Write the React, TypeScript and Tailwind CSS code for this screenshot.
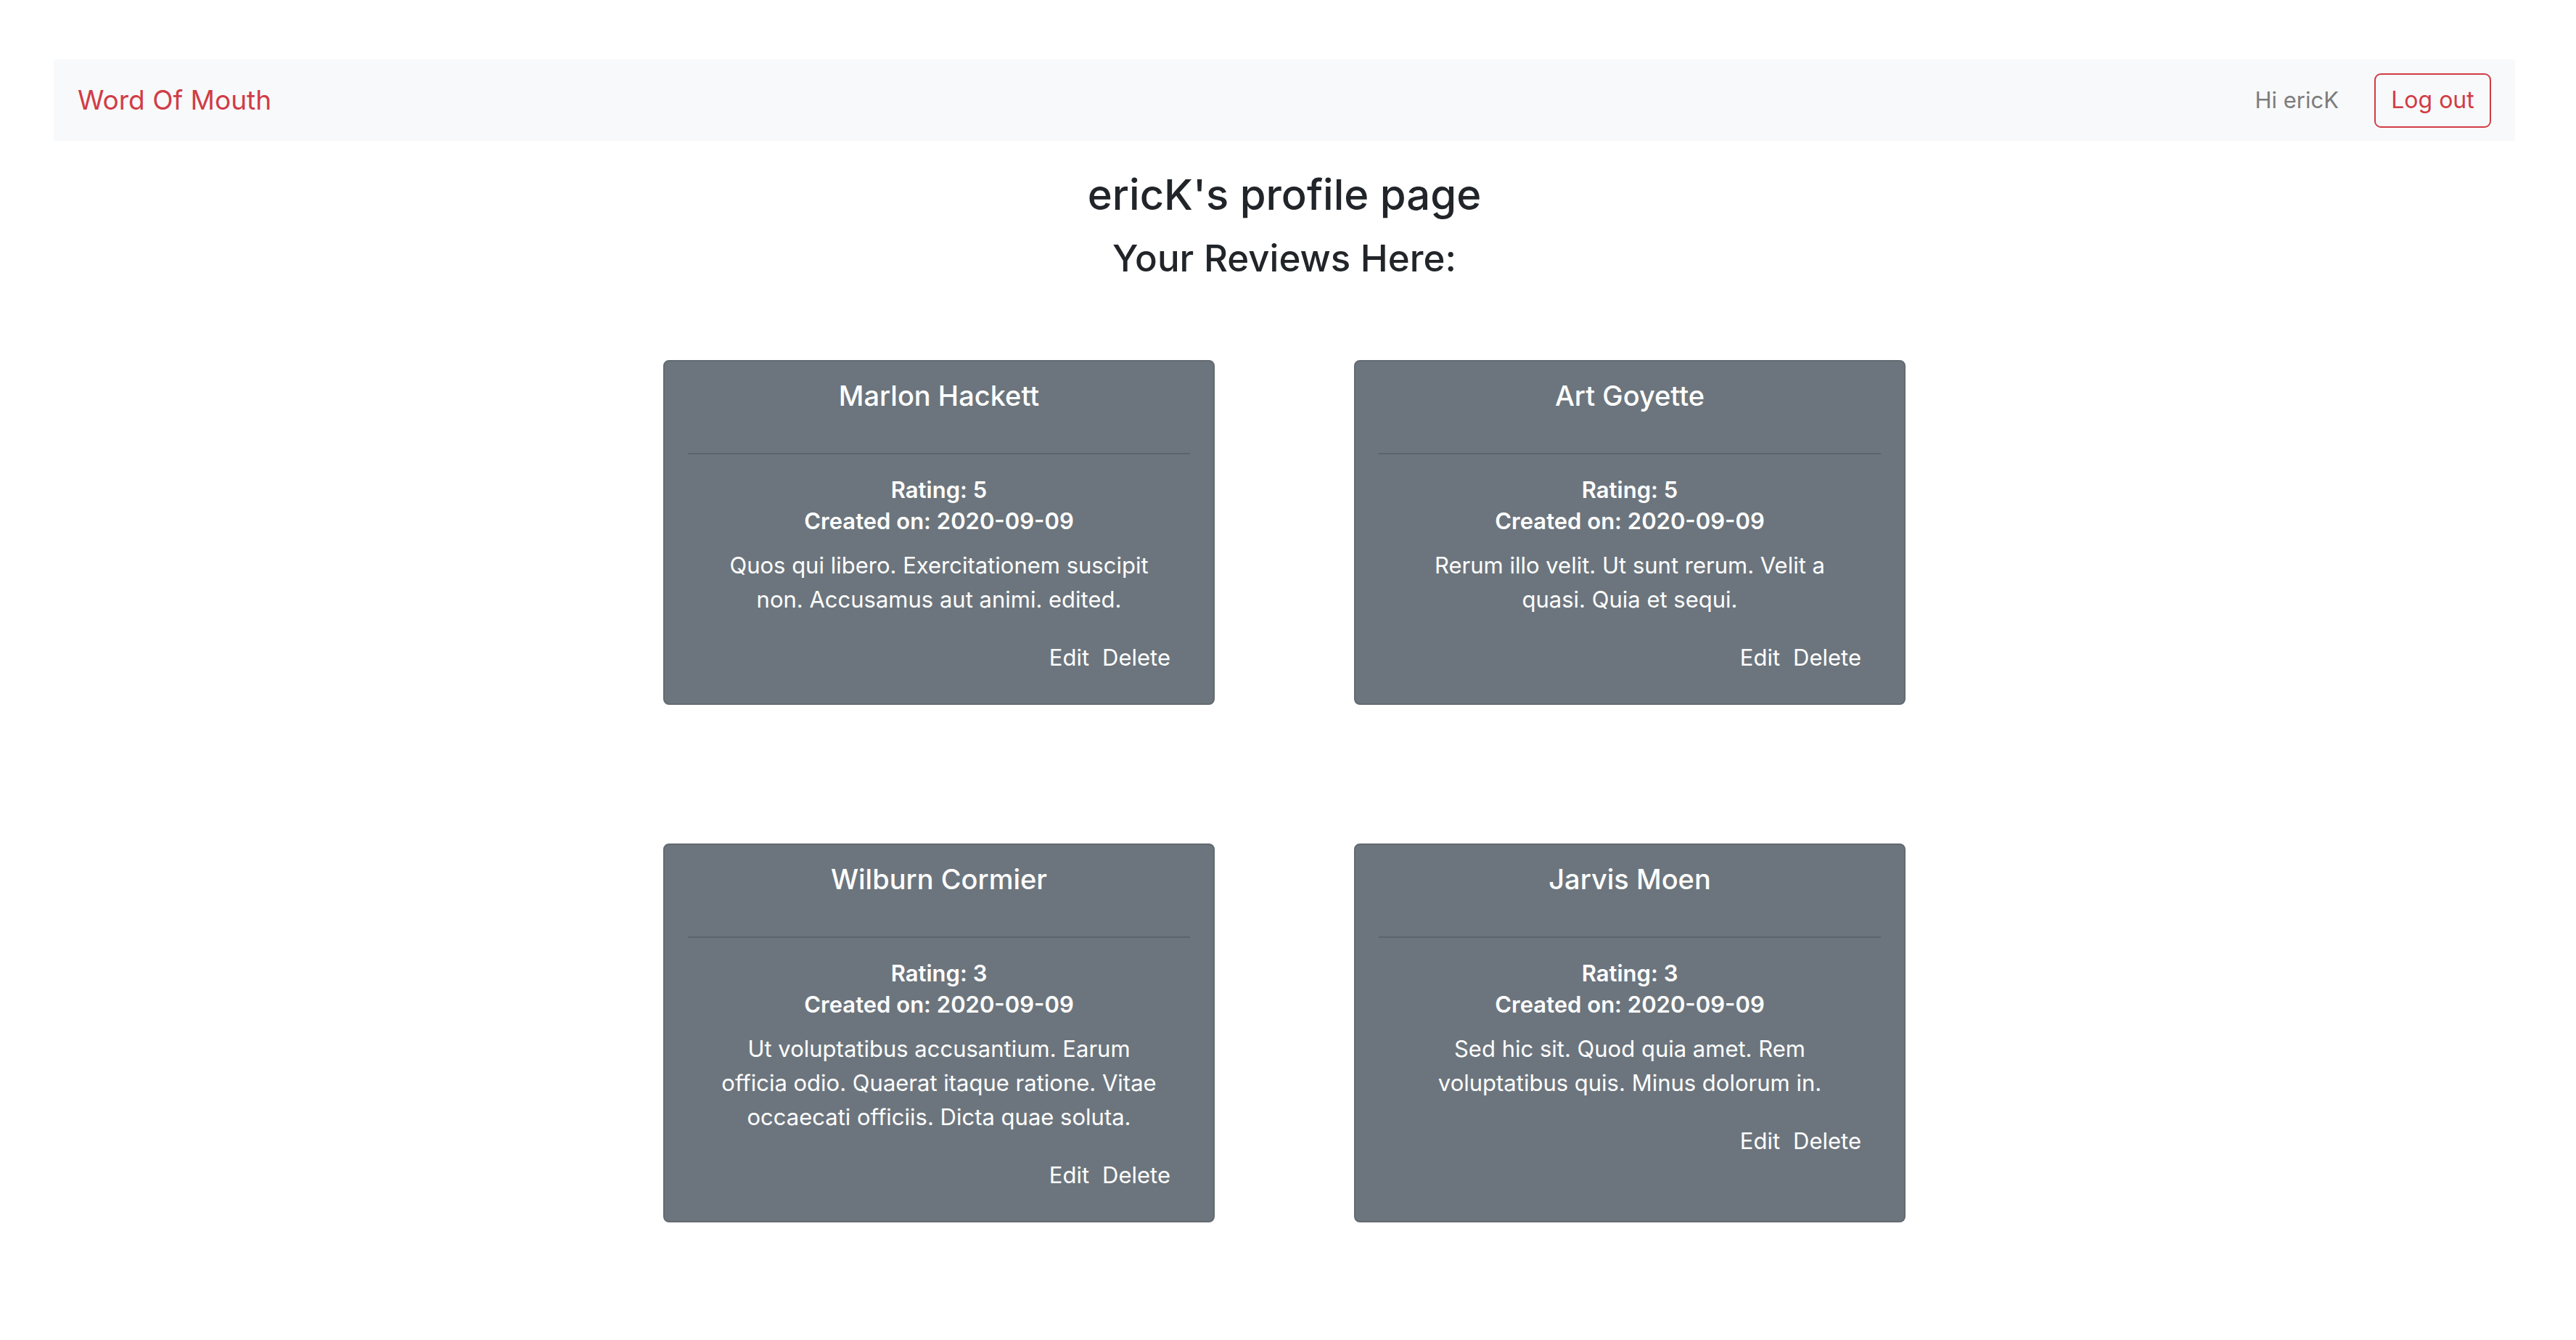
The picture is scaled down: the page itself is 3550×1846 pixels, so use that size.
const reviews = [
  {
    name: "Marlon Hackett",
    rating: 5,
    created: "2020-09-09",
    body: "Quos qui libero. Exercitationem suscipit non. Accusamus aut animi. edited.",
  },
  {
    name: "Art Goyette",
    rating: 5,
    created: "2020-09-09",
    body: "Rerum illo velit. Ut sunt rerum. Velit a quasi. Quia et sequi.",
  },
  {
    name: "Wilburn Cormier",
    rating: 3,
    created: "2020-09-09",
    body: "Ut voluptatibus accusantium. Earum officia odio. Quaerat itaque ratione. Vitae occaecati officiis. Dicta quae soluta.",
  },
  {
    name: "Jarvis Moen",
    rating: 3,
    created: "2020-09-09",
    body: "Sed hic sit. Quod quia amet. Rem voluptatibus quis. Minus dolorum in.",
  },
];

function ReviewCard({ review }: { review: (typeof reviews)[number] }) {
  return (
    <div className="flex flex-col rounded-[8px] border-2 border-[#636a71] bg-[#6c757d] px-[32px] pt-[23px] pb-[39px] text-center text-white">
      <h5 className="text-[38px] font-medium leading-[48px]">{review.name}</h5>
      <hr className="mt-[55px] border-0 border-t-2 border-[#5c636a]" />
      <div className="mt-[27px] text-[31px] font-semibold leading-[43px]">
        <div>Rating: {review.rating}</div>
        <div>Created on: {review.created}</div>
      </div>
      <p className="mx-auto mt-[16px] max-w-[600px] text-[31px] leading-[47px]">{review.body}</p>
      <div className="mt-[33px] flex justify-end gap-[18px] pr-[27px] text-[31px] leading-[48px]">
        <a className="cursor-pointer">Edit</a>
        <a className="cursor-pointer">Delete</a>
      </div>
    </div>
  );
}

export default function App() {
  return (
    <div className="min-h-screen bg-white font-['Inter','Noto_Sans',sans-serif] text-[#212529]">
      <div className="ml-[74px] mr-[84px] pt-[82px] pb-[120px]">
        {/* navbar */}
        <nav className="flex h-[112px] items-center justify-between bg-[#f8f9fa] px-[33px]">
          <a className="text-[37px] leading-[48px] text-[#d13c46]">Word Of Mouth</a>
          <div className="flex items-center gap-[49px]">
            <span className="text-[31px] text-[#7c7d7d]">Hi ericK</span>
            <button className="flex h-[75px] w-[161px] items-center justify-center rounded-[9px] border-2 border-[#d13c46] text-[32px] text-[#d13c46]">
              Log out
            </button>
          </div>
        </nav>

        {/* headings */}
        <div className="mt-[38px] flex flex-col items-center">
          <h1 className="text-[58px] font-medium leading-[72px]">ericK's profile page</h1>
          <h2 className="mt-[16px] text-[51px] font-medium leading-[72px]">Your Reviews Here:</h2>
        </div>

        {/* reviews */}
        <div className="mt-[104px] flex justify-center">
          <div className="grid grid-cols-[760px_760px] gap-x-[192px] gap-y-[191px]">
            {reviews.map((r) => (
              <ReviewCard key={r.name} review={r} />
            ))}
          </div>
        </div>
      </div>
    </div>
  );
}
